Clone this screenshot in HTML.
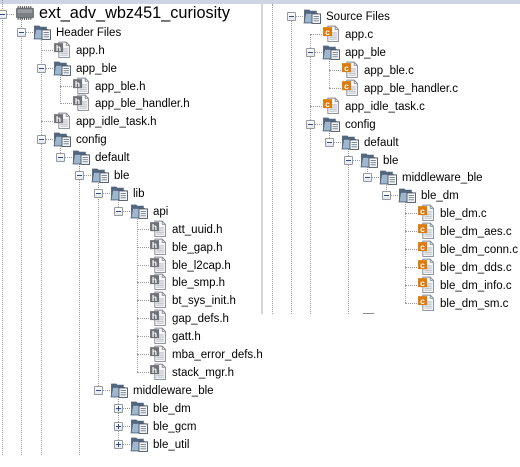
<!DOCTYPE html>
<html><head><meta charset="utf-8"><style>
body{margin:0;width:520px;height:467px;overflow:hidden;background:#fff;font-family:Tahoma,"Liberation Sans","DejaVu Sans",sans-serif;font-size:11.5px;color:#000;position:relative}
.v{position:absolute;width:0;border-left:1px dotted #9a9a9a}
.r{position:absolute;height:18px;width:10px}
.h{position:absolute;top:9px;height:0;border-top:1px dotted #9a9a9a;left:0;width:12px}
.e{position:absolute;left:-4px;top:5px;width:7px;height:7px;border:1px solid #929aa6;background:linear-gradient(#fff,#e4e7ec);border-radius:1px;z-index:2}
.e:before{content:"";position:absolute;left:1px;top:3px;width:5px;height:1px;background:#2b4d8c}
.e.p:after{content:"";position:absolute;left:3px;top:1px;width:1px;height:5px;background:#2b4d8c}
.i{position:absolute;left:12px;top:0;width:18px;height:17px}
.t{position:absolute;left:35px;top:1px;line-height:18px;white-space:nowrap}
#rp{position:absolute;left:261px;top:0;width:259px;height:314px;background:#fff;border-left:2px solid #d6d6d6;overflow:hidden}
</style></head><body>
<svg width="0" height="0" style="position:absolute">
<defs>
<symbol id="fo" viewBox="0 0 17 16"><path d="M1 2.5h5l1 1h6v11H1z" fill="#52667f"/><path d="M2.5 6h11l-1.5 9H1z" fill="#9fb6cf" stroke="#4d6178" stroke-width=".8"/><rect x="8.5" y="6.5" width="8" height="9" fill="#f4f6f8" stroke="#4f5a66" stroke-width=".9"/><path d="M10 9h5M10 11h5M10 13h5" stroke="#6c7885" stroke-width=".8"/></symbol>
<symbol id="hf" viewBox="0 0 17 16"><path d="M5.5 1h7l3 3v11.5h-10z" fill="#f7f8fa" stroke="#818892" stroke-width=".9"/><path d="M12.5 1v3h3" fill="none" stroke="#818892" stroke-width=".8"/><path d="M9 7.5h5M9 9.5h5M7 11.5h7M7 13.3h7" stroke="#a4abb3" stroke-width=".8"/><rect x="1" y="2" width="8.5" height="8.5" fill="#6f7378"/><text x="5.2" y="9.2" font-size="8" font-weight="bold" fill="#fff" text-anchor="middle" font-family="Liberation Sans,sans-serif">h</text></symbol>
<symbol id="cf" viewBox="0 0 17 16"><path d="M5.5 1h7l3 3v11.5h-10z" fill="#f7f8fa" stroke="#818892" stroke-width=".9"/><path d="M12.5 1v3h3" fill="none" stroke="#818892" stroke-width=".8"/><path d="M9 7.5h5M9 9.5h5M7 11.5h7M7 13.3h7" stroke="#a4abb3" stroke-width=".8"/><rect x="1" y="2" width="8.5" height="8.5" fill="#dc7b0b"/><text x="5.2" y="9.2" font-size="8" font-weight="bold" fill="#fff" text-anchor="middle" font-family="Liberation Sans,sans-serif">c</text></symbol>
<symbol id="ch" viewBox="0 0 19 16"><rect x="1" y="3" width="17" height="10" rx="1.5" fill="#6e7276"/><rect x="2.5" y="4.5" width="14" height="7" fill="#9a9ea2"/><rect x="2.5" y="8" width="14" height="3.5" fill="#7b8084"/><path d="M3 1.5v2M5 1.5v2M7 1.5v2M9 1.5v2M11 1.5v2M13 1.5v2M15 1.5v2M3 12.5v2M5 12.5v2M7 12.5v2M9 12.5v2M11 12.5v2M13 12.5v2M15 12.5v2" stroke="#555" stroke-width="1"/></symbol>
</defs></svg>
<div style="position:absolute;left:0;top:0;width:520px;height:4px;background:#cdd5e4"></div>

<div class="v" style="left:2px;top:0;height:455px"></div>
<div class="v" style="left:21px;top:14px;height:441px"></div>
<div class="v" style="left:41px;top:32px;height:423px"></div>
<div class="v" style="left:60px;top:68px;height:36px"></div>
<div class="v" style="left:60px;top:139px;height:18px"></div>
<div class="v" style="left:79px;top:157px;height:298px"></div>
<div class="v" style="left:98px;top:175px;height:215px"></div>
<div class="v" style="left:118px;top:193px;height:18px"></div>
<div class="v" style="left:118px;top:390px;height:54px"></div>
<div class="v" style="left:137px;top:211px;height:161px"></div>

<div class="r" style="left:2px;top:5px"><div class="h"></div><div class="e"></div><svg class="i" style="left:13px;top:-1px;width:20px;height:18px"><use href="#ch"/></svg><div class="t" style="left:37px;top:-1px;font-size:16.3px;line-height:18px">ext_adv_wbz451_curiosity</div></div>
<div class="r" style="left:21px;top:23px"><div class="h"></div><div class="e"></div><svg class="i"><use href="#fo"/></svg><div class="t">Header Files</div></div>
<div class="r" style="left:41px;top:41px"><div class="h"></div><svg class="i"><use href="#hf"/></svg><div class="t">app.h</div></div>
<div class="r" style="left:41px;top:59px"><div class="h"></div><div class="e"></div><svg class="i"><use href="#fo"/></svg><div class="t">app_ble</div></div>
<div class="r" style="left:60px;top:77px"><div class="h"></div><svg class="i"><use href="#hf"/></svg><div class="t">app_ble.h</div></div>
<div class="r" style="left:60px;top:94px"><div class="h"></div><svg class="i"><use href="#hf"/></svg><div class="t">app_ble_handler.h</div></div>
<div class="r" style="left:41px;top:112px"><div class="h"></div><svg class="i"><use href="#hf"/></svg><div class="t">app_idle_task.h</div></div>
<div class="r" style="left:41px;top:130px"><div class="h"></div><div class="e"></div><svg class="i"><use href="#fo"/></svg><div class="t">config</div></div>
<div class="r" style="left:60px;top:148px"><div class="h"></div><div class="e"></div><svg class="i"><use href="#fo"/></svg><div class="t">default</div></div>
<div class="r" style="left:79px;top:166px"><div class="h"></div><div class="e"></div><svg class="i"><use href="#fo"/></svg><div class="t">ble</div></div>
<div class="r" style="left:98px;top:184px"><div class="h"></div><div class="e"></div><svg class="i"><use href="#fo"/></svg><div class="t">lib</div></div>
<div class="r" style="left:118px;top:202px"><div class="h"></div><div class="e"></div><svg class="i"><use href="#fo"/></svg><div class="t">api</div></div>
<div class="r" style="left:137px;top:220px"><div class="h"></div><svg class="i"><use href="#hf"/></svg><div class="t">att_uuid.h</div></div>
<div class="r" style="left:137px;top:238px"><div class="h"></div><svg class="i"><use href="#hf"/></svg><div class="t">ble_gap.h</div></div>
<div class="r" style="left:137px;top:256px"><div class="h"></div><svg class="i"><use href="#hf"/></svg><div class="t">ble_l2cap.h</div></div>
<div class="r" style="left:137px;top:273px"><div class="h"></div><svg class="i"><use href="#hf"/></svg><div class="t">ble_smp.h</div></div>
<div class="r" style="left:137px;top:291px"><div class="h"></div><svg class="i"><use href="#hf"/></svg><div class="t">bt_sys_init.h</div></div>
<div class="r" style="left:137px;top:309px"><div class="h"></div><svg class="i"><use href="#hf"/></svg><div class="t">gap_defs.h</div></div>
<div class="r" style="left:137px;top:327px"><div class="h"></div><svg class="i"><use href="#hf"/></svg><div class="t">gatt.h</div></div>
<div class="r" style="left:137px;top:345px"><div class="h"></div><svg class="i"><use href="#hf"/></svg><div class="t">mba_error_defs.h</div></div>
<div class="r" style="left:137px;top:363px"><div class="h"></div><svg class="i"><use href="#hf"/></svg><div class="t">stack_mgr.h</div></div>
<div class="r" style="left:98px;top:381px"><div class="h"></div><div class="e"></div><svg class="i"><use href="#fo"/></svg><div class="t">middleware_ble</div></div>
<div class="r" style="left:118px;top:399px"><div class="h"></div><div class="e p"></div><svg class="i"><use href="#fo"/></svg><div class="t">ble_dm</div></div>
<div class="r" style="left:118px;top:417px"><div class="h"></div><div class="e p"></div><svg class="i"><use href="#fo"/></svg><div class="t">ble_gcm</div></div>
<div class="r" style="left:118px;top:435px"><div class="h"></div><div class="e p"></div><svg class="i"><use href="#fo"/></svg><div class="t">ble_util</div></div>

<div id="rp">
<div style="position:absolute;left:-263px;top:0;width:520px;height:4px;background:#cdd5e4"></div>
<div style="position:relative;left:-263px;top:0">
<div class="v" style="left:272px;top:4px;height:310px"></div>
<div class="v" style="left:291px;top:16px;height:298px"></div>
<div class="v" style="left:310px;top:34px;height:280px"></div>
<div class="v" style="left:329px;top:52px;height:36px"></div>
<div class="v" style="left:329px;top:124px;height:18px"></div>
<div class="v" style="left:348px;top:142px;height:172px"></div>
<div class="v" style="left:367px;top:160px;height:18px"></div>
<div class="v" style="left:386px;top:178px;height:18px"></div>
<div class="v" style="left:405px;top:196px;height:107px"></div>
<div style="position:absolute;left:363px;top:313px;width:11px;height:1px;background:#8a8f96"></div>

<div class="r" style="left:291px;top:7px"><div class="h"></div><div class="e"></div><svg class="i"><use href="#fo"/></svg><div class="t">Source Files</div></div>
<div class="r" style="left:310px;top:25px"><div class="h"></div><svg class="i"><use href="#cf"/></svg><div class="t">app.c</div></div>
<div class="r" style="left:310px;top:43px"><div class="h"></div><div class="e"></div><svg class="i"><use href="#fo"/></svg><div class="t">app_ble</div></div>
<div class="r" style="left:329px;top:61px"><div class="h"></div><svg class="i"><use href="#cf"/></svg><div class="t">app_ble.c</div></div>
<div class="r" style="left:329px;top:79px"><div class="h"></div><svg class="i"><use href="#cf"/></svg><div class="t">app_ble_handler.c</div></div>
<div class="r" style="left:310px;top:97px"><div class="h"></div><svg class="i"><use href="#cf"/></svg><div class="t">app_idle_task.c</div></div>
<div class="r" style="left:310px;top:115px"><div class="h"></div><div class="e"></div><svg class="i"><use href="#fo"/></svg><div class="t">config</div></div>
<div class="r" style="left:329px;top:133px"><div class="h"></div><div class="e"></div><svg class="i"><use href="#fo"/></svg><div class="t">default</div></div>
<div class="r" style="left:348px;top:151px"><div class="h"></div><div class="e"></div><svg class="i"><use href="#fo"/></svg><div class="t">ble</div></div>
<div class="r" style="left:367px;top:168px"><div class="h"></div><div class="e"></div><svg class="i"><use href="#fo"/></svg><div class="t">middleware_ble</div></div>
<div class="r" style="left:386px;top:186px"><div class="h"></div><div class="e"></div><svg class="i"><use href="#fo"/></svg><div class="t">ble_dm</div></div>
<div class="r" style="left:405px;top:204px"><div class="h"></div><svg class="i"><use href="#cf"/></svg><div class="t">ble_dm.c</div></div>
<div class="r" style="left:405px;top:222px"><div class="h"></div><svg class="i"><use href="#cf"/></svg><div class="t">ble_dm_aes.c</div></div>
<div class="r" style="left:405px;top:240px"><div class="h"></div><svg class="i"><use href="#cf"/></svg><div class="t">ble_dm_conn.c</div></div>
<div class="r" style="left:405px;top:258px"><div class="h"></div><svg class="i"><use href="#cf"/></svg><div class="t">ble_dm_dds.c</div></div>
<div class="r" style="left:405px;top:276px"><div class="h"></div><svg class="i"><use href="#cf"/></svg><div class="t">ble_dm_info.c</div></div>
<div class="r" style="left:405px;top:294px"><div class="h"></div><svg class="i"><use href="#cf"/></svg><div class="t">ble_dm_sm.c</div></div>
</div>
</div>
</body></html>
